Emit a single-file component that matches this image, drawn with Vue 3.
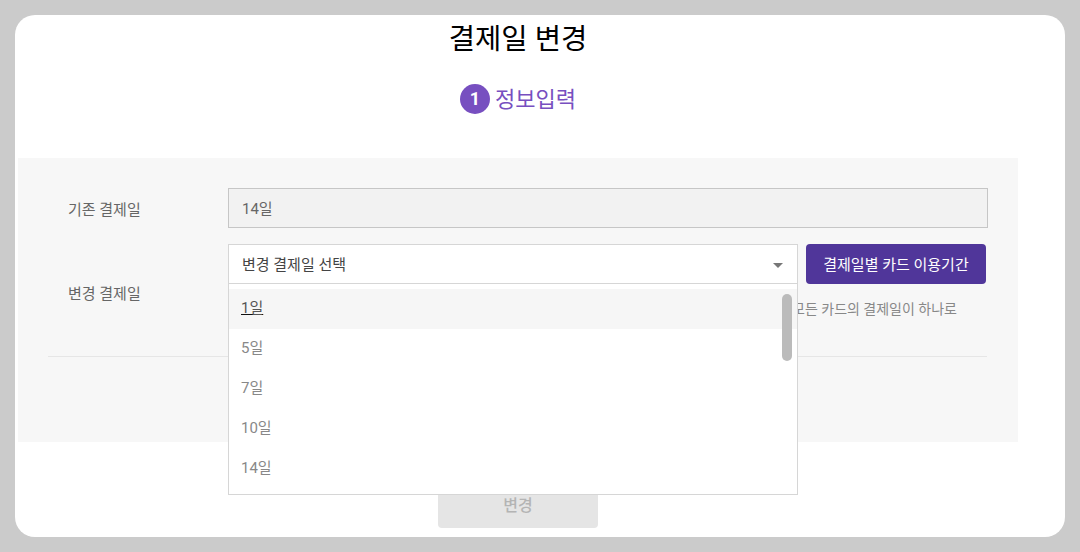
<script setup>
const options = ['1일', '5일', '7일', '10일', '14일']
</script>

<template>
  <div class="page">
    <main class="modal">
      <h1 class="title">결제일 변경</h1>
      <div class="step">
        <span class="step-num">1</span>
        <span class="step-text">정보입력</span>
      </div>
      <section class="panel">
        <div class="row row-current">
          <div class="label">기존 결제일</div>
          <div class="readonly">14일</div>
        </div>
        <div class="row row-change">
          <div class="label">변경 결제일</div>
          <div class="field">
            <div class="controls">
              <div class="select">
                <span>변경 결제일 선택</span>
                <svg class="caret" width="10" height="5" viewBox="0 0 10 5"><path d="M0 0h10L5 5z" fill="#777" /></svg>
                <div class="menu">
                  <div v-for="(o, i) in options" :key="o" class="option" :class="{ active: i === 0 }">{{ o }}</div>
                  <div class="thumb"></div>
                </div>
              </div>
              <button class="period-btn">결제일별 카드 이용기간</button>
            </div>
            <p class="note">결제일을 변경하시면 보유하신 모든 카드의 결제일이 하나로</p>
          </div>
        </div>
      </section>
      <div class="actions">
        <button class="submit">변경</button>
      </div>
    </main>
  </div>
</template>

<style>
html, body { margin: 0; padding: 0; background: #cbcbcb; }
</style>

<style scoped>
.page {
  box-sizing: border-box;
  width: 1080px;
  height: 552px;
  padding: 15px;
  overflow: hidden;
  background: #cbcbcb;
  font-family: Roboto, "Noto Sans CJK KR", sans-serif;
}
.modal {
  position: relative;
  box-sizing: border-box;
  width: 1050px;
  height: 522px;
  background: #fff;
  border-radius: 20px;
  padding-left: 3px;
}
.title {
  margin: 0;
  width: 1000px;
  padding-top: 4px;
  height: 40px;
  line-height: 40px;
  font-size: 28.6px;
  font-weight: 400;
  color: #000;
  text-align: center;
}
.step {
  display: flex;
  align-items: center;
  justify-content: center;
  gap: 5px;
  width: 1000px;
  margin-top: 25px;
  box-sizing: border-box;
  height: 30px;
}
.step-num {
  width: 30px;
  height: 30px;
  border-radius: 50%;
  background: #774fc0;
  color: #fff;
  font-size: 18px;
  font-weight: 700;
  line-height: 30px;
  text-align: center;
}
.step-text {
  font-size: 22px;
  line-height: 30px;
  color: #774fc0;
  padding-top: 2px;
}
.panel {
  box-sizing: border-box;
  width: 1000px;
  height: 284px;
  margin-top: 44px;
  padding: 30px 30px 0;
  background: #f7f7f7;
}
.row {
  display: flex;
  align-items: center;
  width: 940px;
}
.row-current { height: 40px; }
.row-change {
  width: 939px;
  height: 113px;
  margin-top: 16px;
  border-bottom: 1px solid #e6e6e6;
  box-sizing: border-box;
  align-items: flex-start;
}
.label {
  box-sizing: border-box;
  width: 180px;
  padding-left: 20px;
  flex: none;
  font-size: 15px;
  color: #666;
}
.row-change .label { margin-top: 40px; line-height: 20px; }
.readonly {
  box-sizing: border-box;
  width: 760px;
  height: 40px;
  line-height: 40px;
  padding-left: 13px;
  border: 1px solid #c6c6c6;
  background: #f2f2f2;
  font-size: 15px;
  color: #666;
}
.field { width: 760px; flex: none; }
.controls {
  display: flex;
  gap: 8px;
}
.select {
  position: relative;
  box-sizing: border-box;
  width: 570px;
  height: 40px;
  display: flex;
  align-items: center;
  justify-content: space-between;
  padding: 0 14px 2px 13px;
  background: #fff;
  border: 1px solid #d6d6d6;
  font-size: 15px;
  color: #444;
}
.caret { flex: none; margin-top: 4px; }
.menu {
  position: absolute;
  z-index: 2;
  left: -1px;
  top: 38px;
  box-sizing: border-box;
  width: 570px;
  height: 212px;
  padding-top: 5px;
  background: #fff;
  border: 1px solid #d6d6d6;
}
.option {
  height: 40px;
  line-height: 39px;
  padding-left: 12px;
  font-size: 15px;
  color: #888;
}
.option.active {
  background: #f6f6f6;
  color: #555;
  text-decoration: underline;
  text-decoration-color: #111;
}
.thumb {
  position: absolute;
  top: 10px;
  right: 5px;
  width: 10px;
  height: 67px;
  border-radius: 5px;
  background: #bbb;
}
.period-btn {
  width: 180px;
  height: 40px;
  padding: 0 0 2px;
  border: 0;
  border-radius: 4px;
  background: #50369a;
  color: #fff;
  font: 400 15px Roboto, "Noto Sans CJK KR", sans-serif;
}
.note {
  margin: 15px 0 0;
  width: 729px;
  text-align: right;
  font-size: 14px;
  line-height: 20px;
  color: #888;
}
.actions {
  display: flex;
  width: 1000px;
  margin-top: 38px;
  padding-left: 420px;
  box-sizing: border-box;
}
.submit {
  width: 160px;
  height: 48px;
  padding: 0;
  border: 0;
  border-radius: 4px;
  background: #e5e5e5;
  color: #b4b4b4;
  font: 500 16px Roboto, "Noto Sans CJK KR", sans-serif;
}
</style>
